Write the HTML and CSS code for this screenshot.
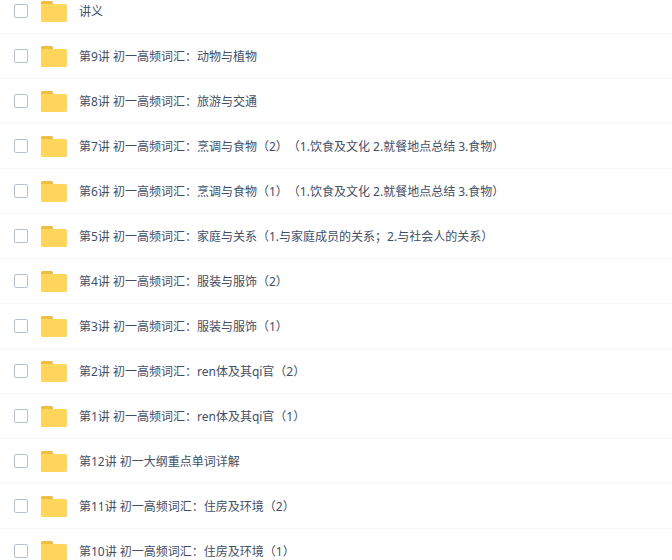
FILE: index.html
```
<!DOCTYPE html>
<html lang="zh-CN">
<head>
  <meta charset="utf-8">
  <title>文件列表</title>
  <link rel="stylesheet" href="styles.css">
</head>
<body>

<svg class="sprite" aria-hidden="true">
  <symbol id="folder" viewBox="0 0 26 21">
    <path fill="#ecbe46" d="M1.5 0h9A1.5 1.5 0 0 1 12 1.5V6H0V1.5A1.5 1.5 0 0 1 1.5 0z"/>
    <path fill="#ffd55b" d="M0 3h24.5A1.5 1.5 0 0 1 26 4.5v15a1.5 1.5 0 0 1-1.5 1.5h-23A1.5 1.5 0 0 1 0 19.5z"/>
  </symbol>
</svg>

<main class="files">
  <ul class="list">
    <li class="row">
      <input type="checkbox" class="check" id="f1">
      <svg class="icon"><use href="#folder"/></svg>
      <label class="name" for="f1">讲义</label>
    </li>
    <li class="row">
      <input type="checkbox" class="check" id="f2">
      <svg class="icon"><use href="#folder"/></svg>
      <label class="name" for="f2">第9讲 初一高频词汇：动物与植物</label>
    </li>
    <li class="row">
      <input type="checkbox" class="check" id="f3">
      <svg class="icon"><use href="#folder"/></svg>
      <label class="name" for="f3">第8讲 初一高频词汇：旅游与交通</label>
    </li>
    <li class="row">
      <input type="checkbox" class="check" id="f4">
      <svg class="icon"><use href="#folder"/></svg>
      <label class="name" for="f4">第7讲 初一高频词汇：烹调与食物（2）（1.饮食及文化 2.就餐地点总结 3.食物）</label>
    </li>
    <li class="row">
      <input type="checkbox" class="check" id="f5">
      <svg class="icon"><use href="#folder"/></svg>
      <label class="name" for="f5">第6讲 初一高频词汇：烹调与食物（1）（1.饮食及文化 2.就餐地点总结 3.食物）</label>
    </li>
    <li class="row">
      <input type="checkbox" class="check" id="f6">
      <svg class="icon"><use href="#folder"/></svg>
      <label class="name" for="f6">第5讲 初一高频词汇：家庭与关系（1.与家庭成员的关系；2.与社会人的关系）</label>
    </li>
    <li class="row">
      <input type="checkbox" class="check" id="f7">
      <svg class="icon"><use href="#folder"/></svg>
      <label class="name" for="f7">第4讲 初一高频词汇：服装与服饰（2）</label>
    </li>
    <li class="row">
      <input type="checkbox" class="check" id="f8">
      <svg class="icon"><use href="#folder"/></svg>
      <label class="name" for="f8">第3讲 初一高频词汇：服装与服饰（1）</label>
    </li>
    <li class="row">
      <input type="checkbox" class="check" id="f9">
      <svg class="icon"><use href="#folder"/></svg>
      <label class="name" for="f9">第2讲 初一高频词汇：ren体及其qi官（2）</label>
    </li>
    <li class="row">
      <input type="checkbox" class="check" id="f10">
      <svg class="icon"><use href="#folder"/></svg>
      <label class="name" for="f10">第1讲 初一高频词汇：ren体及其qi官（1）</label>
    </li>
    <li class="row">
      <input type="checkbox" class="check" id="f11">
      <svg class="icon"><use href="#folder"/></svg>
      <label class="name" for="f11">第12讲 初一大纲重点单词详解</label>
    </li>
    <li class="row">
      <input type="checkbox" class="check" id="f12">
      <svg class="icon"><use href="#folder"/></svg>
      <label class="name" for="f12">第11讲 初一高频词汇：住房及环境（2）</label>
    </li>
    <li class="row">
      <input type="checkbox" class="check" id="f13">
      <svg class="icon"><use href="#folder"/></svg>
      <label class="name" for="f13">第10讲 初一高频词汇：住房及环境（1）</label>
    </li>
  </ul>
</main>

</body>
</html>
```
FILE: styles.css
```
body {
  margin: 0;
  background: #fff;
  color: #424e67;
  font: 12px/18px "Noto Sans", "Noto Sans CJK SC", sans-serif;
  text-spacing-trim: space-all;
}

.sprite {
  display: none;
}

.files {
  height: 100vh;
  overflow: hidden;
}

/* list is scrolled a little, the first row is cut at the top */
.list {
  margin: -11px 0 0;
  padding: 0;
  list-style: none;
}

.row {
  display: flex;
  align-items: center;
  box-sizing: border-box;
  height: 45px;
  padding: 0 14px;
  border-bottom: 1px solid #f2f6fd;
}

.check {
  appearance: none;
  flex: none;
  box-sizing: border-box;
  width: 14px;
  height: 14px;
  margin: 0;
  border: 1px solid #b5c2d5;
  border-radius: 2px;
  background: #fff;
}

.check:checked {
  background: #3b8cff;
}

.icon {
  flex: none;
  width: 26px;
  height: 21px;
  margin: 0 12px 0 13px;
}

.name {
  padding-top: 2px;
  white-space: nowrap;
}
```
